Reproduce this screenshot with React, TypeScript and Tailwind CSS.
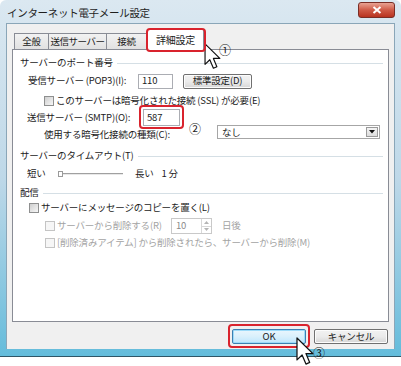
import React from 'react';

function Arrow({ className }: { className: string }) {
  return (
    <svg viewBox="0 0 13 21" className={className}>
      <path
        d="M0.7 0.7 L0.7 16.6 L4.4 13 L7.2 19.6 L9.9 18.4 L7.2 12 L12.2 12 Z"
        fill="#fff"
        stroke="#111"
        strokeWidth="0.9"
        strokeLinejoin="round"
      />
    </svg>
  );
}

function Check({ disabled = false }: { disabled?: boolean }) {
  return disabled ? (
    <span className="w-[10px] h-[10px] shrink-0 border border-[#c4c4c4] bg-[#f6f6f6]" />
  ) : (
    <span className="w-[10px] h-[10px] shrink-0 border border-[#8e8f8f] bg-gradient-to-br from-[#cfcfcf] to-[#f7f7f7]" />
  );
}

function Section({ label }: { label: string }) {
  return (
    <div className="flex items-center h-[14px] gap-[4px]">
      <span>{label}</span>
      <span className="flex-1 h-px bg-[#d5dfe5]" />
    </div>
  );
}

function VistaButton({ label, focused = false, className = '' }: { label: string; focused?: boolean; className?: string }) {
  return (
    <div
      className={`h-[15px] flex items-center justify-center rounded-[2px] border ${
        focused
          ? 'border-[#3c7fb1] bg-gradient-to-b from-[#eaf6fd] via-[#d9f0fc] to-[#bee6fd] shadow-[inset_0_0_0_1px_#9ddbf9]'
          : 'border-[#707070] bg-gradient-to-b from-[#f2f2f2] via-[#ebebeb] to-[#d6d6d6] shadow-[inset_0_0_0_1px_#fcfcfc]'
      } ${className}`}
    >
      {label}
    </div>
  );
}

export default function App() {
  return (
    <div className="w-[401px] h-[366px] bg-white relative overflow-hidden whitespace-nowrap font-['Noto_Sans_CJK_JP','Noto_Sans',sans-serif] text-[9.5px] tracking-[-0.2px] leading-none text-[#1b1b1b]">
      {/* window */}
      <div className="h-[357px] flex flex-col rounded-t-[6px] border-b border-[#2f5566] bg-gradient-to-b from-[#dbe8f1] via-[#bed8e8] to-[#63bcdb]">
        {/* title bar */}
        <div className="h-[23px] flex justify-between pl-[7px] pr-[6px]">
          <span className="pt-[8px] text-[10.5px] tracking-[-0.3px] text-[#1e1e1e]">インターネット電子メール設定</span>
          <div className="mt-[2px] w-[37px] h-[16px] rounded-[3px] border border-[#7a2e26] bg-gradient-to-b from-[#e8a293] via-[#cf5a47] to-[#b8321f] flex items-center justify-center">
            <svg viewBox="0 0 10 8" className="w-[10px] h-[8px]">
              <path d="M1.5 1 L8.5 7 M8.5 1 L1.5 7" stroke="#fff" strokeWidth="2" />
            </svg>
          </div>
        </div>

        {/* client */}
        <div className="mx-[6px] h-[326px] bg-[#f0f0f0] border-x border-t border-[#8aa6b8] flex flex-col px-[5px] pt-[5px]">
          {/* tabs */}
          <div className="h-[20px] flex items-end pl-[2px]">
            <div className="w-[35px] h-[16px] border border-b-0 border-[#898c95] bg-gradient-to-b from-[#f2f2f2] to-[#e1e1e1] flex items-center justify-center">全般</div>
            <div className="w-[58px] h-[16px] border border-l-0 border-b-0 border-[#898c95] bg-gradient-to-b from-[#f2f2f2] to-[#e1e1e1] flex items-center justify-center tracking-[-0.5px]">送信サーバー</div>
            <div className="w-[40px] h-[16px] border border-l-0 border-b-0 border-[#898c95] bg-gradient-to-b from-[#f2f2f2] to-[#e1e1e1] flex items-center justify-center">接続</div>
            <div className="relative z-10 -mb-px w-[57px] h-[21px] border border-b-0 border-[#898c95] bg-white flex items-center justify-center text-[10px]">
              詳細設定
              <span className="absolute left-[-2px] right-[-3px] top-[-2px] bottom-[-2px] border-2 border-[#d9232d] rounded-[4px]" />
            </div>
          </div>

          {/* panel */}
          <div className="h-[273px] border border-[#898c95] bg-white flex flex-col pl-[7px] pr-[5px] pt-[6px]">
            <Section label="サーバーのポート番号" />

            <div className="mt-[3px] h-[16px] flex items-center pl-[8px]">
              <span className="w-[110px]">受信サーバー (POP3)(I):</span>
              <div className="w-[35px] h-[15px] border border-[#abadb3] flex items-center pl-[3px]">110</div>
              <VistaButton label="標準設定(D)" className="ml-[10px] w-[69px]" />
            </div>

            <div className="mt-[5px] h-[14px] flex items-center gap-[2px] pl-[24px]">
              <Check />
              <span>このサーバーは暗号化された接続 (SSL) が必要(E)</span>
            </div>

            <div className="mt-[1px] h-[17px] flex items-center pl-[7px]">
              <span className="w-[116px]">送信サーバー (SMTP)(O):</span>
              <div className="relative w-[37px] h-[17px] border border-[#abadb3] flex items-center pl-[3px]">
                587
                <span className="absolute left-[-5px] right-[-5px] top-[-5px] bottom-[-4px] border-2 border-[#d9232d] rounded-[4px]" />
                <span className="absolute left-[45px] top-[13px] text-[12px] leading-none">②</span>
              </div>
            </div>

            <div className="-mt-px h-[14px] flex items-center pl-[24px]">
              <span className="w-[173px] pt-[6px]">使用する暗号化接続の種類(C):</span>
              <div className="w-[163px] h-[14px] border border-[#a6a6a6] flex items-center justify-between pl-[4px] pr-[1px]">
                <span className="pt-[2px]">なし</span>
                <span className="w-[12px] h-[10px] border border-[#9a9a9a] bg-gradient-to-b from-[#f4f4f4] to-[#dcdcdc] flex items-center justify-center">
                  <svg viewBox="0 0 6 4" className="w-[6px] h-[4px]">
                    <path d="M0 0 L6 0 L3 3.5 Z" fill="#111" />
                  </svg>
                </span>
              </div>
            </div>

            <div className="mt-[10px]">
              <Section label="サーバーのタイムアウト(T)" />
            </div>

            <div className="mt-[4px] h-[14px] flex items-center pl-[7px]">
              <span className="w-[31px]">短い</span>
              <div className="w-[65px] flex items-center">
                <span className="w-[5px] h-[6px] border border-[#9a9a9a] bg-white" />
                <span className="flex-1 h-[2px] border-t border-[#a0a0a0] border-b border-b-[#e8e8e8]" />
              </div>
              <span className="ml-[12px]">長い</span>
              <span className="ml-[8px]">1 分</span>
            </div>

            <div className="mt-[5px]">
              <Section label="配信" />
            </div>

            <div className="mt-[1px] h-[14px] flex items-center gap-[2px] pl-[9px]">
              <Check />
              <span>サーバーにメッセージのコピーを置く(L)</span>
            </div>

            <div className="mt-[3px] h-[16px] flex items-center pl-[25px] text-[#a3a3a3]">
              <Check disabled />
              <span className="ml-[2px] w-[114px] shrink-0">サーバーから削除する(R)</span>
              <div className="w-[41px] h-[16px] shrink-0 border border-[#c9c9c9] flex">
                <span className="flex-1 flex items-center pl-[4px] text-[#8a8a8a]">10</span>
                <span className="w-[10px] flex flex-col border-l border-[#d8d8d8]">
                  <span className="flex-1 flex items-center justify-center border-b border-[#d8d8d8]">
                    <svg viewBox="0 0 5 3" className="w-[5px] h-[3px]"><path d="M0 3 L5 3 L2.5 0 Z" fill="#b4b4b4" /></svg>
                  </span>
                  <span className="flex-1 flex items-center justify-center">
                    <svg viewBox="0 0 5 3" className="w-[5px] h-[3px]"><path d="M0 0 L5 0 L2.5 3 Z" fill="#b4b4b4" /></svg>
                  </span>
                </span>
              </div>
              <span className="ml-[10px]">日後</span>
            </div>

            <div className="mt-[2px] h-[14px] flex items-center gap-[2px] pl-[25px] text-[#a3a3a3]">
              <Check disabled />
              <span>[削除済みアイテム] から削除されたら、サーバーから削除(M)</span>
            </div>
          </div>

          {/* buttons */}
          <div className="mt-[7px] flex justify-end gap-[8px] pr-[1px]">
            <div className="relative">
              <VistaButton label="OK" focused className="w-[74px]" />
              <span className="absolute left-[-4px] right-[-4px] top-[-5px] bottom-[-4px] border-2 border-[#d9232d] rounded-[4px]" />
            </div>
            <VistaButton label="キャンセル" className="w-[74px]" />
          </div>
        </div>
      </div>

      {/* annotations */}
      <Arrow className="absolute left-[204px] top-[43px] w-[17px] h-[27px]" />
      <span className="absolute left-[219px] top-[44px] text-[12px] leading-none">①</span>
      <Arrow className="absolute left-[296px] top-[337px] w-[18px] h-[29px]" />
      <span className="absolute left-[313px] top-[347px] text-[12px] leading-none">③</span>
    </div>
  );
}
